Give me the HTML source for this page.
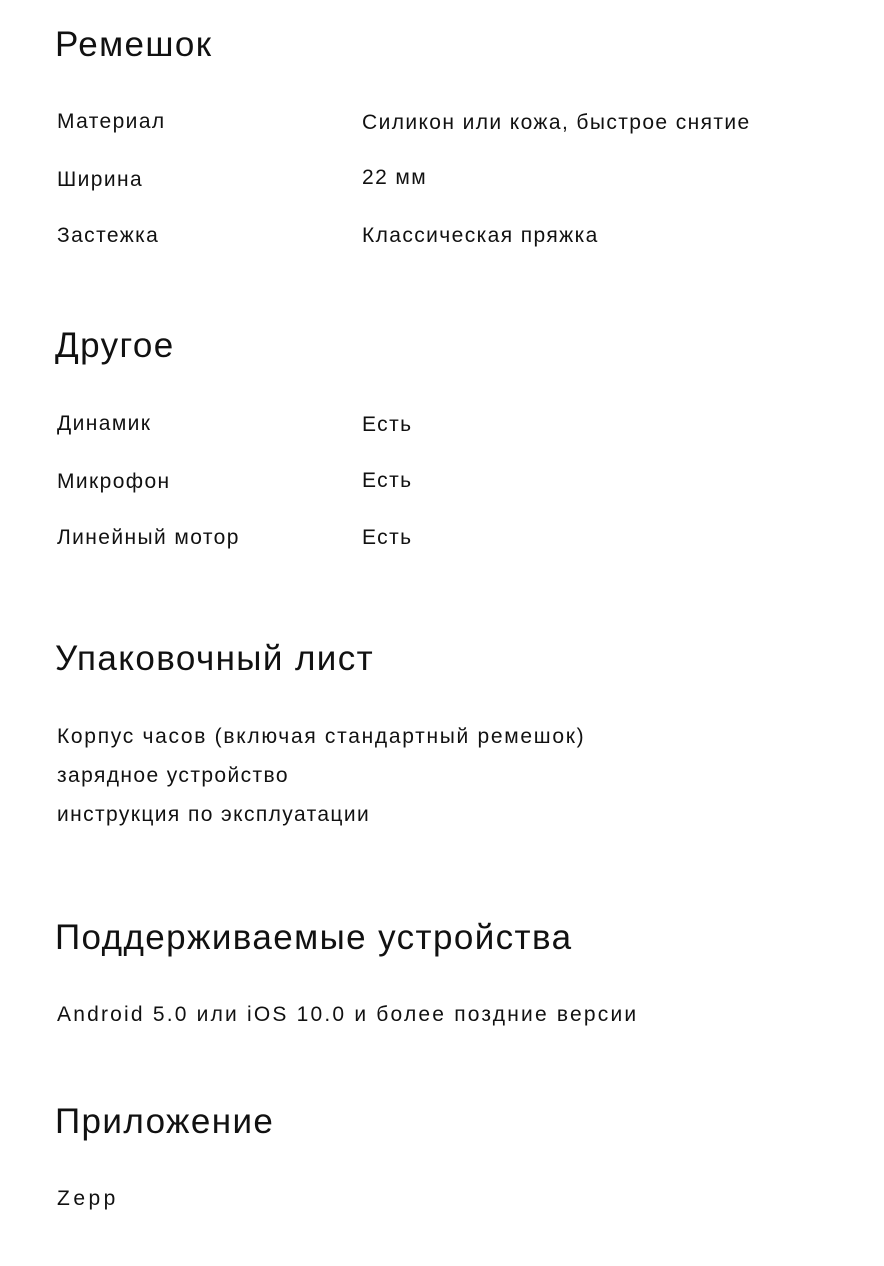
<!DOCTYPE html>
<html><head><meta charset="utf-8"><style>
body{margin:0;width:884px;height:1266px;background:#fff;position:relative;font-family:"Liberation Sans","DejaVu Sans",sans-serif;color:#111;overflow:hidden}
div{position:absolute;white-space:nowrap}
.h{font-size:35px;line-height:40px;height:40px;left:55px;letter-spacing:1.4px}
.t{font-size:21px;line-height:30px;height:30px;letter-spacing:1.4px}
.l{left:57px}.v{left:362px}
</style></head><body>
<div class="h" style="top:25px">Ремешок</div>
<div class="t l" style="top:107px">Материал</div><div class="t v" style="top:108px">Силикон или кожа, быстрое снятие</div>
<div class="t l" style="top:165px">Ширина</div><div class="t v" style="top:163px">22 мм</div>
<div class="t l" style="top:221px">Застежка</div><div class="t v" style="top:221px">Классическая пряжка</div>

<div class="h" style="top:326px">Другое</div>
<div class="t l" style="top:409px">Динамик</div><div class="t v" style="top:410px">Есть</div>
<div class="t l" style="top:467px">Микрофон</div><div class="t v" style="top:466px">Есть</div>
<div class="t l" style="top:523px">Линейный мотор</div><div class="t v" style="top:523px">Есть</div>

<div class="h" style="top:639px">Упаковочный лист</div>
<div class="t l" style="top:722px;letter-spacing:1.7px">Корпус часов (включая стандартный ремешок)</div>
<div class="t l" style="top:761px">зарядное устройство</div>
<div class="t l" style="top:800px">инструкция по эксплуатации</div>

<div class="h" style="top:918px">Поддерживаемые устройства</div>
<div class="t l" style="top:1000px;letter-spacing:2.2px">Android 5.0 или iOS 10.0 и более поздние версии</div>

<div class="h" style="top:1102px">Приложение</div>
<div class="t l" style="top:1184px;letter-spacing:3.5px">Zepp</div>
</body></html>
